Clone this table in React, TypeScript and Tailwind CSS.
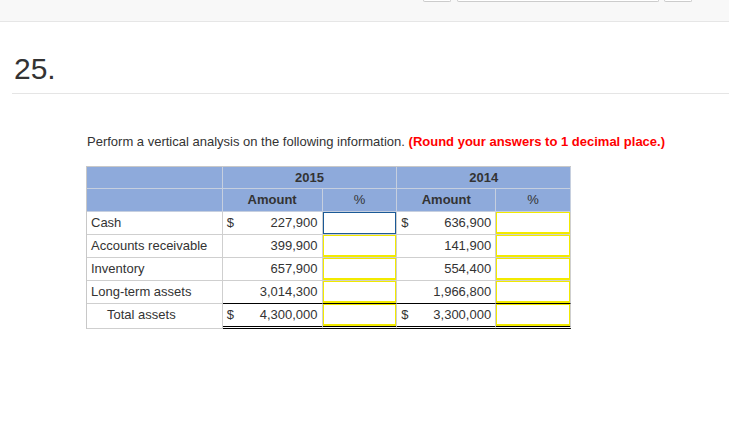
import React from 'react';

type Row = {
    label: string;
    a2015: string;
    a2014: string;
    dollar?: boolean;
    total?: boolean;
};

const rows: Row[] = [
    { label: 'Cash', a2015: '227,900', a2014: '636,900', dollar: true },
    { label: 'Accounts receivable', a2015: '399,900', a2014: '141,900' },
    { label: 'Inventory', a2015: '657,900', a2014: '554,400' },
    { label: 'Long-term assets', a2015: '3,014,300', a2014: '1,966,800' },
    { label: 'Total assets', a2015: '4,300,000', a2014: '3,300,000', dollar: true, total: true },
];

function AmountCell({ value, dollar, width, before, total }: { value: string; dollar?: boolean; width: string; before: boolean; total?: boolean }) {
    const edge = before
        ? 'border-b border-b-black'
        : total
            ? 'border-b-[3px] border-double border-b-black'
            : 'border-b border-b-[#cfcfcf]';
    return (
        <div className={`${width} h-full flex items-center justify-between px-[4px] border-r border-r-[#cfcfcf] ${edge}`}>
            <span>{dollar ? '$' : ''}</span>
            <span>{value}</span>
        </div>
    );
}

function InputCell({ width, focused, before, total }: { width: string; focused?: boolean; before: boolean; total?: boolean }) {
    const edge = before
        ? 'border-b border-b-black'
        : total
            ? 'border-b-[3px] border-double border-b-black'
            : 'border-b border-b-[#cfcfcf]';
    return (
        <div className={`${width} h-full border-r border-r-[#cfcfcf] ${edge}`}>
            <div
                className={
                    focused
                        ? 'h-full w-full bg-white border-[1.5px] border-[#1b5a96]'
                        : 'h-full w-full bg-white border border-[#f2ea00] border-b-2'
                }
            />
        </div>
    );
}

export default function App() {
    return (
        <div className="w-[729px] h-[446px] bg-white overflow-hidden text-[#333]" style={{ fontFamily: '"Liberation Sans", Arial, sans-serif' }}>
            <div className="h-[22px] bg-[#f8f8f8] border-b border-[#e6e6e6] flex items-start">
                <div className="ml-[423px] w-[28px] h-[2px] border-x border-b border-[#cccccc] rounded-b-[3px] bg-white" />
                <div className="ml-[6px] w-[202px] h-[2px] border-x border-b border-[#cccccc] rounded-b-[3px] bg-white" />
                <div className="ml-[5px] w-[28px] h-[2px] border-x border-b border-[#cccccc] rounded-b-[3px] bg-white" />
            </div>

            <div className="pl-[12px]">
                <div className="pt-[31px] pb-[8px] pl-[2px] text-[30px] leading-[32px] font-light text-[#333]">25.</div>
                <div className="border-t border-[#e5e5e5]" />
            </div>

            <div className="pl-[86px] pt-[40px]">
                <p className="text-[13px] leading-[16px] text-[#333] pl-[1px]">
                    Perform a vertical analysis on the following information.{' '}
                    <span className="font-bold text-[#ff0000]">(Round your answers to 1 decimal place.)</span>
                </p>

                <div className="mt-[16px] w-[485px] text-[13px] border-l border-t border-[#c8c8c8]">
                    <div className="flex h-[22px] bg-[#8eaadb] font-bold">
                        <div className="w-[136px] border-r border-b border-[#c6cfdf]" />
                        <div className="w-[175px] flex items-center justify-center border-r border-b border-[#c6cfdf]">2015</div>
                        <div className="w-[174px] flex items-center justify-center border-r border-b border-[#c6cfdf]">2014</div>
                    </div>
                    <div className="flex h-[23px] bg-[#8eaadb] font-bold">
                        <div className="w-[136px] border-r border-b border-[#c6cfdf]" />
                        <div className="w-[100px] flex items-center justify-center border-r border-b border-[#c6cfdf]">Amount</div>
                        <div className="w-[75px] flex items-center justify-center border-r border-b border-[#c6cfdf] font-normal">%</div>
                        <div className="w-[99px] flex items-center justify-center border-r border-b border-[#c6cfdf]">Amount</div>
                        <div className="w-[75px] flex items-center justify-center border-r border-b border-[#c6cfdf] font-normal">%</div>
                    </div>

                    {rows.map((row, i) => {
                        const before = i === rows.length - 2;
                        return (
                            <div key={row.label} className={`flex ${row.total ? 'h-[25px]' : 'h-[23px]'}`}>
                                <div className={`w-[136px] h-full flex items-center border-r border-b border-[#cfcfcf] ${row.total ? 'pl-[20px] pb-[2px]' : 'pl-[4px]'}`}>
                                    {row.label}
                                </div>
                                <AmountCell value={row.a2015} dollar={row.dollar} width="w-[100px]" before={before} total={row.total} />
                                <InputCell width="w-[75px]" focused={i === 0} before={before} total={row.total} />
                                <AmountCell value={row.a2014} dollar={row.dollar} width="w-[99px]" before={before} total={row.total} />
                                <InputCell width="w-[75px]" before={before} total={row.total} />
                            </div>
                        );
                    })}
                </div>
            </div>
        </div>
    );
}
